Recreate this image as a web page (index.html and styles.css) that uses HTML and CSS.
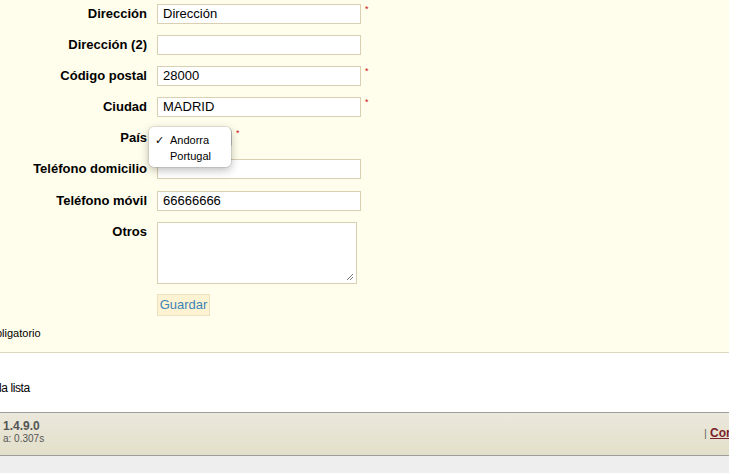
FILE: index.html
```html
<!DOCTYPE html>
<html lang="es">
<head>
<meta charset="utf-8">
<title>Formulario</title>
<link rel="stylesheet" href="styles.css">
</head>
<body>
<div class="formarea">
  <div class="row">
    <label class="lbl">Dirección</label>
    <div class="input">Dirección</div>
    <span class="req">*</span>
  </div>
  <div class="row">
    <label class="lbl">Dirección (2)</label>
    <div class="input"></div>
  </div>
  <div class="row">
    <label class="lbl">Código postal</label>
    <div class="input">28000</div>
    <span class="req">*</span>
  </div>
  <div class="row">
    <label class="lbl">Ciudad</label>
    <div class="input">MADRID</div>
    <span class="req">*</span>
  </div>
  <div class="row">
    <label class="lbl">País</label>
    <div class="selectwrap">
      <div class="select"></div>
      <div class="popup">
        <div class="opt"><span class="check">✓</span>Andorra</div>
        <div class="opt">Portugal</div>
      </div>
    </div>
    <span class="req">*</span>
  </div>
  <div class="row">
    <label class="lbl">Teléfono domicilio</label>
    <div class="input"></div>
  </div>
  <div class="row tall">
    <label class="lbl">Teléfono móvil</label>
    <div class="input">66666666</div>
  </div>
  <div class="row">
    <label class="lbl">Otros</label>
    <div class="textarea">
      <svg class="grip" width="8" height="8" viewBox="0 0 8 8"><path d="M7 1L1 7M7 4L4 7" stroke="#777" stroke-width="1" fill="none"/></svg>
    </div>
  </div>
  <div class="row btnrow">
    <div class="btn">Guardar</div>
  </div>
  <div class="note">bligatorio</div>
</div>
<div class="whitearea">
  <div class="back">la lista</div>
</div>
<div class="footer">
  <div class="fleft">
    <div class="ver">1.4.9.0</div>
    <div class="time">a: 0.307s</div>
  </div>
  <div class="fright"><span class="sep">|</span> <a class="flink" href="#">Contacto</a></div>
</div>
</body>
</html>
```

FILE: styles.css
```css
html, body {
  margin: 0;
  padding: 0;
  overflow: hidden;
}
body {
  background: #eeeeee;
  font-family: "Liberation Sans", Arial, Helvetica, sans-serif;
  color: #000;
  width: 729px;
  height: 473px;
}
.formarea {
  background: #fffdeb;
  padding-top: 4px;
  height: 348px;
  border-bottom: 1px solid #dcd8bc;
}
.row {
  display: flex;
  align-items: flex-start;
  margin-bottom: 11px;
}
.row.tall {
  padding-top: 1px;
}
.lbl {
  width: 147px;
  text-align: right;
  font-weight: bold;
  font-size: 13px;
  line-height: 20px;
  margin-right: 10px;
  flex-shrink: 0;
}
.input {
  box-sizing: border-box;
  width: 204px;
  height: 20px;
  background: #fff;
  border: 1px solid #d9d0b1;
  font-size: 13px;
  line-height: 18px;
  padding-left: 5px;
}
.req {
  color: #cc1111;
  font-size: 9px;
  line-height: 9px;
  margin-left: 4px;
  margin-top: 1px;
}
.selectwrap {
  position: relative;
  width: 75px;
  height: 20px;
}
.select {
  box-sizing: border-box;
  width: 75px;
  height: 20px;
  background: #fff;
  border: 1px solid #c8c8c8;
  border-radius: 4px;
}
.popup {
  position: absolute;
  left: -8px;
  top: -1px;
  width: 82px;
  height: 40px;
  box-sizing: border-box;
  background: #fff;
  border-radius: 5px;
  box-shadow: 0 3px 10px rgba(0,0,0,0.28), 0 0 0 1px rgba(0,0,0,0.08);
  padding-top: 5px;
}
.opt {
  font-size: 11px;
  line-height: 16px;
  padding-left: 21px;
  position: relative;
}
.check {
  position: absolute;
  left: 6px;
  top: 0;
  font-size: 11px;
}
.textarea {
  box-sizing: border-box;
  width: 200px;
  height: 62px;
  background: #fff;
  border: 1px solid #d9d0b1;
  display: flex;
  justify-content: flex-end;
  align-items: flex-end;
  padding: 0 2px 2px 0;
}
.grip {
  display: block;
}
.btnrow {
  margin-top: -1px;
  padding-left: 157px;
  margin-bottom: 0;
}
.btn {
  box-sizing: border-box;
  height: 22px;
  width: 53px;
  background: #fdf3d2;
  border: 1px solid #ece2bf;
  color: #3f84b8;
  font-size: 13px;
  line-height: 20px;
  text-align: center;
}
.note {
  font-size: 11px;
  line-height: 13px;
  margin-top: 11px;
  margin-left: -4px;
}
.whitearea {
  background: #fff;
  height: 59px;
  border-bottom: 1px solid #9d9d9a;
  display: flex;
  align-items: center;
}
.back {
  font-size: 12px;
  line-height: 14px;
  margin-top: 11px;
  letter-spacing: -0.4px;
  margin-left: -1px;
}
.footer {
  background: linear-gradient(#ebe8dc, #e2dfc9);
  border-bottom: 1px solid #9d9d9a;
  display: flex;
  align-items: flex-start;
  padding-top: 7px;
  box-sizing: border-box;
  height: 43px;
}
.fleft {
  margin-left: 3px;
}
.ver {
  font-weight: bold;
  font-size: 12px;
  line-height: 13px;
  color: #555;
}
.time {
  font-size: 10px;
  line-height: 12px;
  color: #555;
}
.fright {
  margin-left: auto;
  margin-right: -33px;
  font-size: 11px;
  line-height: 13px;
  margin-top: 7px;
  white-space: nowrap;
}
.sep {
  color: #666;
}
.flink {
  color: #7a1f2b;
  font-weight: bold;
  text-decoration: underline;
  font-size: 12px;
}
```
